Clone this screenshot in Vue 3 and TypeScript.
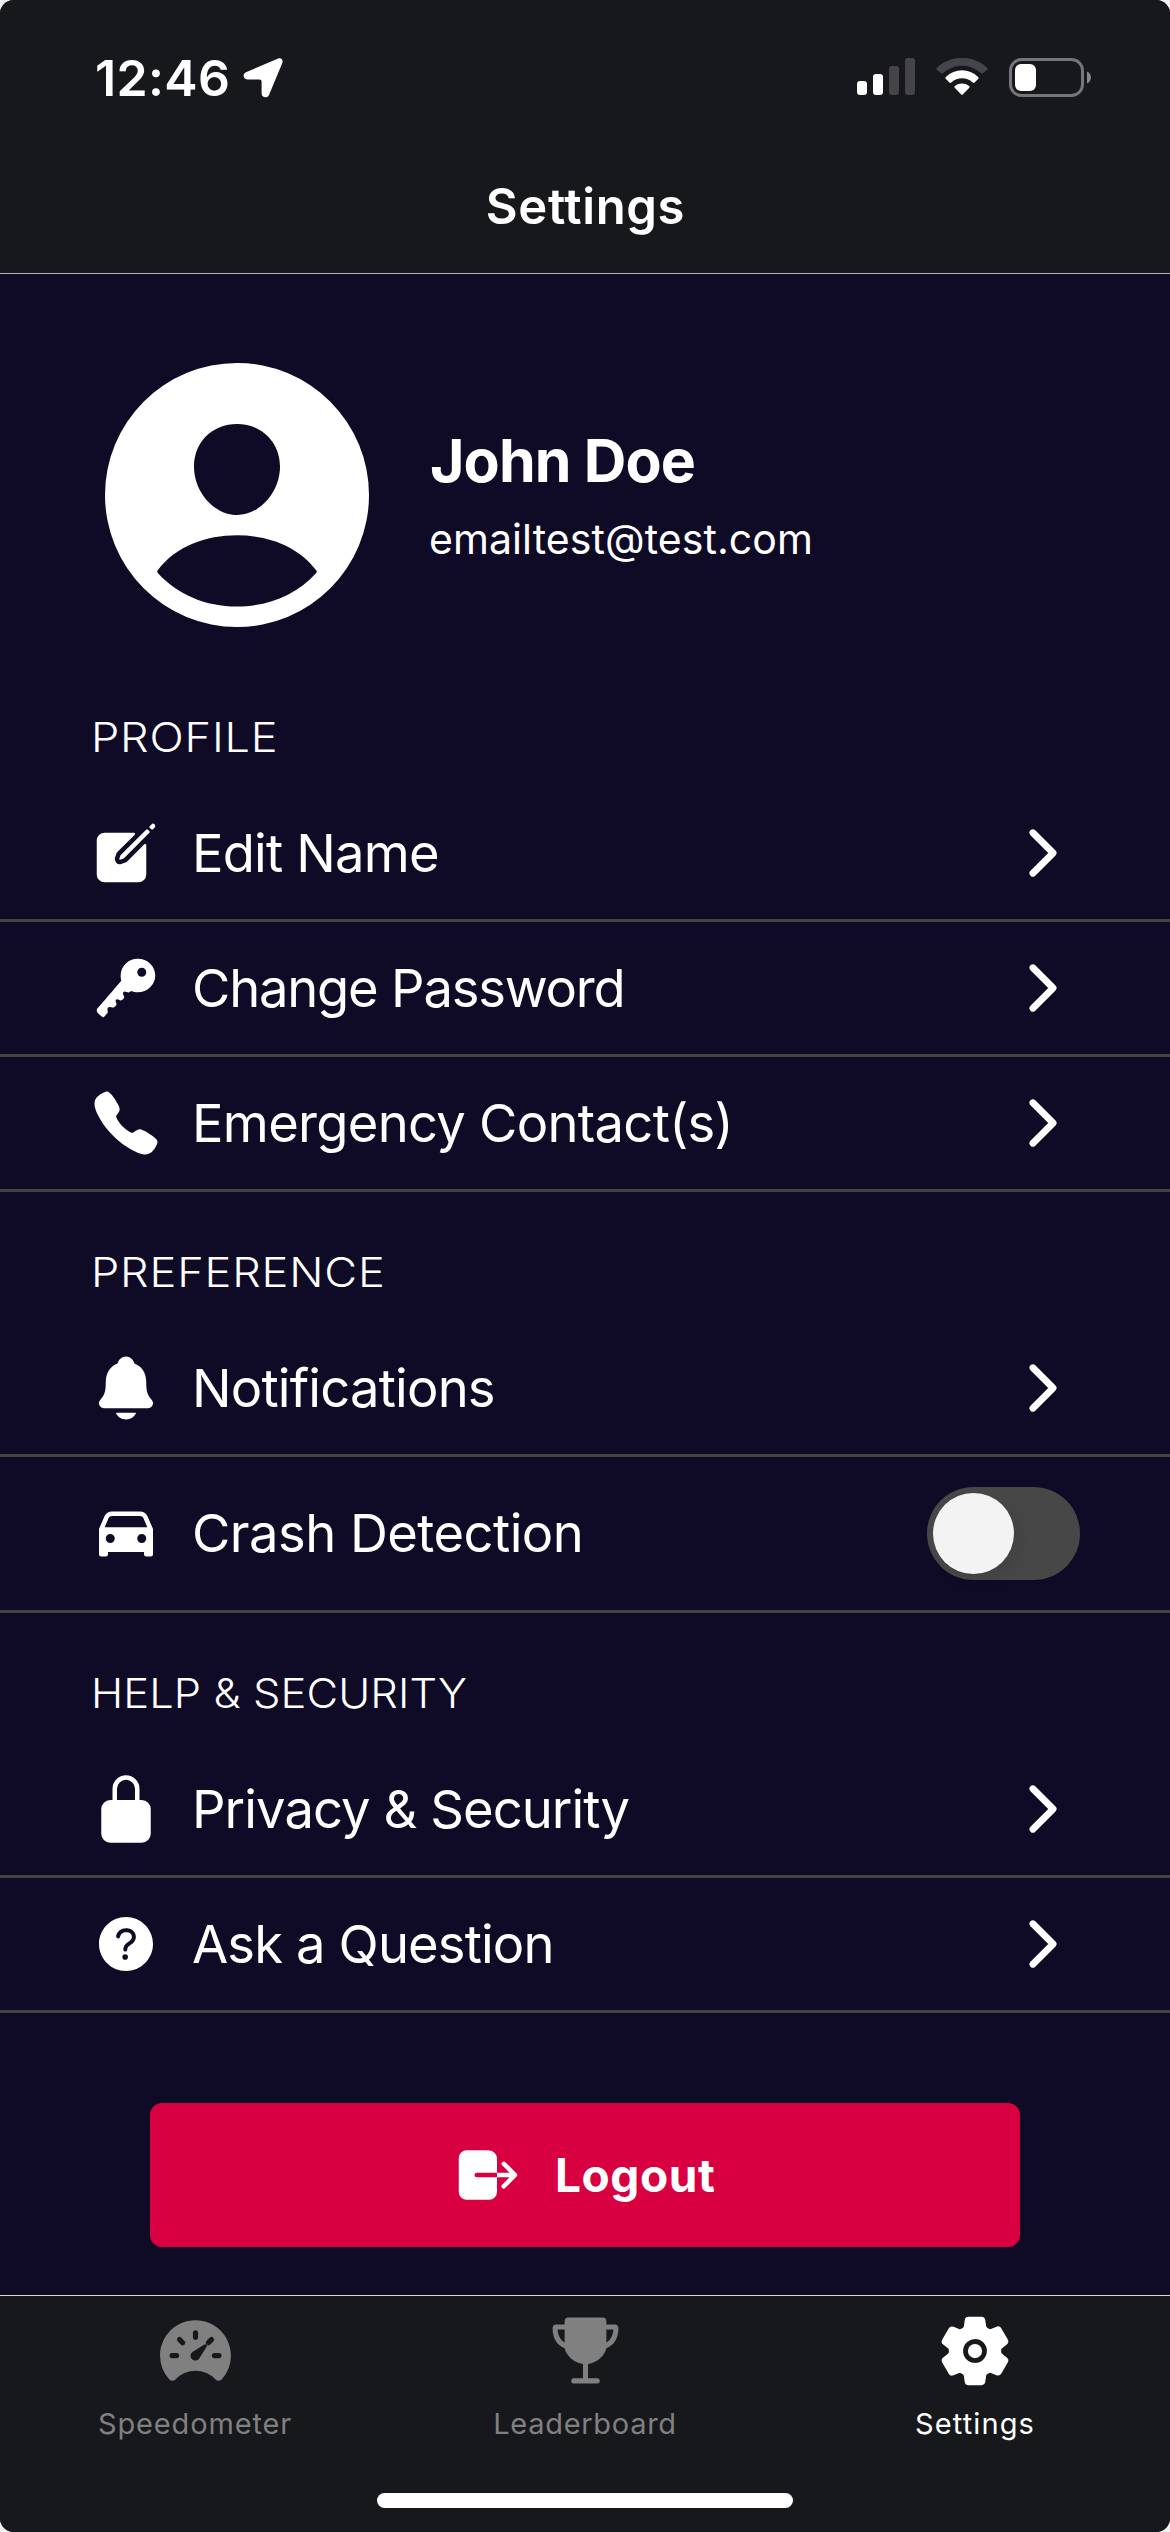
<script setup lang="ts">
interface Row {
  label: string
  icon: string
  toggle?: boolean
}

interface Section {
  title: string
  key: string
  rows: Row[]
}

const icons: Record<string, string> = {
  create:
    'M459.94 53.25a16.06 16.06 0 00-23.22-.56L424.35 65a8 8 0 000 11.31l11.34 11.32a8 8 0 0011.34 0l12.06-12c6.1-6.09 6.67-16.01.85-22.38zM399.34 90L218.82 270.2a9 9 0 00-2.31 3.93L208.16 299a3.91 3.91 0 004.86 4.86l24.85-8.35a9 9 0 003.93-2.31L422 112.66a9 9 0 000-12.66l-9.95-10a9 9 0 00-12.71 0zM386.34 193.66L264.45 315.79A41.08 41.08 0 01247.58 326l-25.9 8.67a35.92 35.92 0 01-44.33-44.33l8.67-25.9a41.08 41.08 0 0110.19-16.87l122.13-121.91A8 8 0 00312.69 112H104a56 56 0 00-56 56v240a56 56 0 0056 56h240a56 56 0 0056-56V199.31a8 8 0 00-13.66-5.65z',
  key: 'M218.1 167.17c0 13 0 25.6 4.1 37.4-43.1 50.6-156.9 184.3-167.5 194.5a20.17 20.17 0 00-6.7 15c0 8.5 5.2 16.7 9.6 21.3 6.6 6.9 34.8 33 40 28 15.4-15 18.5-19 24.8-25.2 9.5-9.3-1-28.3 2.3-36s6.8-9.2 12.5-10.4 15.8 2.9 23.7 3c8.3.1 12.8-3.4 19-9.2 5-4.6 8.6-8.9 8.7-15.6.2-9-12.8-20.9-3.1-30.4s23.7 6.2 34 5 22.8-15.5 24.1-21.6-11.7-21.8-9.7-30.7c.7-3 6.8-10 11.4-11s25 6.9 29.6 5.9c5.6-1.2 12.1-7.1 17.4-10.4 15.5 6.7 29.6 9.4 47.7 9.4 68.5 0 124-53.4 124-119.2S408.5 48 340 48s-121.9 53.37-121.9 119.17zM400 144a32 32 0 11-32-32 32 32 0 0132 32z',
  call: 'M391 480c-19.52 0-46.94-7.06-88-30-49.93-28-88.55-53.85-138.21-103.38C116.91 298.77 93.61 267.79 61 208.45c-36.84-67-30.56-102.12-23.54-117.13C45.82 73.38 58.16 62.65 74.11 52a176.3 176.3 0 0128.64-15.2c1-.43 1.93-.84 2.76-1.21 4.95-2.23 12.45-5.6 21.95-2 6.34 2.38 12 7.25 20.86 16 18.17 17.92 43 57.83 52.16 77.43 6.15 13.21 10.22 21.93 10.23 31.71 0 11.45-5.76 20.28-12.75 29.81-1.31 1.79-2.61 3.5-3.87 5.16-7.61 10-9.28 12.89-8.18 18.05 2.23 10.37 18.86 41.24 46.19 68.51s57.31 42.85 67.72 45.07c5.38 1.15 8.33-.59 18.65-8.47 1.48-1.13 3-2.3 4.59-3.47 10.66-7.93 19.08-13.54 30.26-13.54h.06c9.73 0 18.06 4.22 31.86 11.18 18 9.08 59.11 33.59 77.14 51.78 8.77 8.84 13.66 14.48 16.05 20.81 3.6 9.53.21 17-2 22-.37.83-.78 1.74-1.21 2.75a176.49 176.49 0 01-15.29 28.58c-10.63 15.9-21.4 28.21-39.38 36.58A67.42 67.42 0 01391 480z',
  bell: 'M440.08 341.31c-1.66-2-3.29-4-4.89-5.93-22-26.61-35.31-42.67-35.31-118 0-39-9.33-71-27.72-95-13.56-17.73-31.89-31.18-56.05-41.12a3 3 0 01-.82-.67C306.6 51.49 282.82 32 256 32s-50.59 19.49-59.28 48.56a3.13 3.13 0 01-.81.65c-56.38 23.21-83.78 67.74-83.78 136.14 0 75.36-13.29 91.42-35.31 118-1.6 1.93-3.23 3.89-4.89 5.93a35.16 35.16 0 00-4.65 37.62c6.17 13 19.32 21.07 34.33 21.07H410.5c14.94 0 28-8.06 34.19-21a35.17 35.17 0 00-4.61-37.66zM256 480a80.06 80.06 0 0070.44-42.13 4 4 0 00-3.54-5.87H189.12a4 4 0 00-3.55 5.87A80.06 80.06 0 00256 480z',
  car: 'M447.68 220.78a16 16 0 00-1-3.08l-37.78-88.16C400.19 109.17 379 96 354.89 96H157.11c-24.09 0-45.3 13.17-54 33.54L65.29 217.7A15.72 15.72 0 0064 224v176a16 16 0 0016 16h32a16 16 0 0016-16v-16h256v16a16 16 0 0016 16h32a16 16 0 0016-16V224a16.15 16.15 0 00-.32-3.22zM144 320a32 32 0 1132-32 32 32 0 01-32 32zm224 0a32 32 0 1132-32 32 32 0 01-32 32zM104.26 208l28.23-65.85C136.11 133.69 146 128 157.11 128h197.78c11.1 0 21 5.69 24.62 14.15L407.74 208z',
  lock: 'M368 192h-16v-80a96 96 0 10-192 0v80h-16a64.07 64.07 0 00-64 64v176a64.07 64.07 0 0064 64h224a64.07 64.07 0 0064-64V256a64.07 64.07 0 00-64-64zm-48 0H192v-80a64 64 0 11128 0z',
  help: 'M256 64C150 64 64 150 64 256s86 192 192 192 192-86 192-192S362 64 256 64zm-6 304a20 20 0 1120-20 20 20 0 01-20 20zm33.44-102C267.23 276.88 265 286.85 265 296a14 14 0 01-28 0c0-21.91 10.08-39.33 30.82-53.26C287.1 229.8 298 221.6 298 203.57c0-12.26-7-21.57-21.49-28.46-3.41-1.62-11-3.2-20.34-3.09-11.72.15-20.82 2.95-27.83 8.59C215.12 191.25 214 202.83 214 203a14 14 0 11-28-1.35c.11-2.43 1.8-24.32 24.77-42.8 11.91-9.58 27.06-14.56 45-14.78 12.7-.15 24.63 2 32.72 5.82C312.7 161.34 326 180.43 326 203.57c0 33.83-22.61 49.02-42.56 62.43z',
}

const sections: Section[] = [
  {
    title: 'PROFILE',
    key: 'profile',
    rows: [
      { label: 'Edit Name', icon: 'create' },
      { label: 'Change Password', icon: 'key' },
      { label: 'Emergency Contact(s)', icon: 'call' },
    ],
  },
  {
    title: 'PREFERENCE',
    key: 'preference',
    rows: [
      { label: 'Notifications', icon: 'bell' },
      { label: 'Crash Detection', icon: 'car', toggle: true },
    ],
  },
  {
    title: 'HELP & SECURITY',
    key: 'support',
    rows: [
      { label: 'Privacy & Security', icon: 'lock' },
      { label: 'Ask a Question', icon: 'help' },
    ],
  },
]
</script>

<template>
  <div class="screen">
    <header class="top">
      <div class="status">
        <div class="clock">
          <span class="time">12:46</span>
          <svg class="location" width="40" height="40" viewBox="0 0 40 40">
            <path d="M34.6 .8C38 -.6 40.6 1.6 39.2 5.2L26 37C24.6 40.6 18.6 40 18.6 35.6V23.6Q18.6 21.4 16.4 21.4H4.4C0 21.4 -.8 15.8 3 14.2Z" fill="#fff" />
          </svg>
        </div>
        <div class="indicators">
          <svg width="58" height="38" viewBox="0 0 58 38">
            <rect x="0" y="23" width="10" height="14" rx="3" fill="#fff" />
            <rect x="16" y="16" width="10" height="21" rx="3" fill="#fff" />
            <rect x="32" y="8" width="10" height="29" rx="3" fill="#454549" />
            <rect x="48" y="0" width="10" height="37" rx="3" fill="#454549" />
          </svg>
          <svg width="52" height="38" viewBox="0 0 52 38">
            <path d="M.8 11.8Q-.2 10.8 .8 9.8C14.6 -3.4 37.4 -3.4 51.2 9.8Q52.2 10.8 51.2 11.8L47 15.3Q46 16.1 45 15.2C34 5.2 18 5.2 7 15.2Q6 16.1 5 15.3Z" fill="#454549" />
            <path d="M9.7 20.8Q8.8 19.8 9.8 18.9C19 10.1 33 10.1 42.2 18.9Q43.2 19.8 42.3 20.8L38.6 24.5Q37.7 25.3 36.7 24.5C30.5 18.9 21.5 18.9 15.3 24.5Q14.3 25.3 13.4 24.5Z" fill="#fff" />
            <path d="M18.7 29.7Q17.9 28.8 18.9 28C23 24.7 29 24.7 33.1 28Q34.1 28.8 33.3 29.7L27 36.2Q26 37.2 25 36.2Z" fill="#fff" />
          </svg>
          <svg width="82" height="40" viewBox="0 0 82 40">
            <rect x="1.5" y="1.5" width="72" height="36" rx="11" fill="none" stroke="#76767a" stroke-width="3" />
            <rect x="6" y="6" width="21" height="27" rx="6" fill="#fff" />
            <path d="M78 13.5C83.3 15.5 83.3 23.5 78 25.5Z" fill="#88888b" />
          </svg>
        </div>
      </div>
      <h1 class="title"><span>Settings</span></h1>
    </header>

    <main class="content">
      <section class="user">
        <svg class="avatar" width="264" height="264" viewBox="0 0 264 264">
          <path
            fill="#fff"
            fill-rule="evenodd"
            d="M132 0A132 132 0 10132 264A132 132 0 10132 0ZM132 61C107.5 61 89 79 89 103.5C89 129 109 152 132 152S175 129 175 103.5C175 79 156.5 61 132 61ZM52.6 207.5Q51.8 208.7 52.8 210C72 231.5 101 243.6 132 243.6S192 231.5 211.2 210Q212.2 208.7 211.4 207.5C193 183 163 172.3 132 172.3S71 183 52.6 207.5Z"
          />
        </svg>
        <div class="identity">
          <div class="name"><span>John Doe</span></div>
          <div class="email"><span>emailtest@test.com</span></div>
        </div>
      </section>

      <section v-for="section in sections" :key="section.key" :class="['group', section.key]">
        <h2 class="heading"><span class="heading-text">{{ section.title }}</span></h2>
        <div v-for="row in section.rows" :key="row.label" :class="['row', row.icon, { tall: row.toggle }]">
          <svg class="icon" viewBox="0 0 512 512"><path :d="icons[row.icon]" fill="#fff" fill-rule="evenodd" /></svg>
          <span class="label">{{ row.label }}</span>
          <span v-if="row.toggle" class="toggle"><span class="knob" /></span>
          <svg v-else class="chevron" viewBox="0 0 512 512">
            <path d="M184 112l144 144-144 144" fill="none" stroke="#fff" stroke-width="48" stroke-linecap="round" stroke-linejoin="round" />
          </svg>
        </div>
      </section>

      <button class="logout" type="button">
        <svg class="exit" viewBox="0 0 512 512">
          <path
            fill="#fff"
            d="M160 256a16 16 0 0116-16h144V136c0-32-33.79-56-64-56H104a56.06 56.06 0 00-56 56v240a56.06 56.06 0 0056 56h160a56.06 56.06 0 0056-56V272H176a16 16 0 01-16-16zM459.31 244.69l-80-80a16 16 0 00-22.62 22.62L409.37 240H320v32h89.37l-52.68 52.69a16 16 0 1022.62 22.62l80-80a16 16 0 000-22.62z"
          />
        </svg>
        <span class="logout-label">Logout</span>
      </button>
    </main>

    <nav class="tabs">
      <div class="tab speed">
        <div class="tab-icon">
          <svg width="81" height="81" viewBox="0 0 512 512">
            <path
              fill="#808080"
              d="M256 64C132.3 64 32 164.2 32 287.9a223.18 223.18 0 0056.3 148.5c1.1 1.2 2.1 2.4 3.2 3.5a25.19 25.19 0 0037.1-.1 173.13 173.13 0 01254.8 0 25.19 25.19 0 0037.1.1l3.2-3.5A223.18 223.18 0 00480 287.9C480 164.2 379.7 64 256 64z"
            />
            <path d="M256 144v28M108 288h28M376 288h28M155 187l20 20M357 187l-20 20" stroke="#17181c" stroke-width="33" stroke-linecap="round" />
            <path fill="#17181c" d="M326.1 231.9l-47.5 75.5a31 31 0 01-7 7 30.11 30.11 0 01-35-49l75.5-47.5a10.23 10.23 0 0111.7 0 10.06 10.06 0 012.3 14z" />
          </svg>
        </div>
        <span class="tab-label">Speedometer</span>
      </div>
      <div class="tab board">
        <div class="tab-icon">
          <svg width="81" height="81" viewBox="0 0 512 512">
            <path
              fill="#808080"
              fill-rule="evenodd"
              d="M148 48H364a24 24 0 0124 24V92H440a24 24 0 0124 24C464 182 434 224 388 242C376 292 330 332 272 342V432H330a16 16 0 010 32H182a16 16 0 010-32H240V342C182 332 136 292 124 242C78 224 48 182 48 116a24 24 0 0124-24H124V72a24 24 0 0124-24ZM124 124H80C82 163 97 189 124 206ZM388 124H432C430 163 415 189 388 206Z"
            />
          </svg>
        </div>
        <span class="tab-label">Leaderboard</span>
      </div>
      <div class="tab active">
        <div class="tab-icon">
          <svg width="76" height="76" viewBox="0 0 512 512">
            <circle cx="256" cy="256" r="48" fill="#fff" />
            <path
              fill="#fff"
              d="M470.39 300l-.47-.38-31.56-24.75a16.11 16.11 0 01-6.1-13.33v-11.56a16 16 0 016.11-13.22L469.92 212l.47-.38a26.68 26.68 0 005.9-34.06l-42.71-73.9a1.59 1.59 0 01-.13-.22A26.86 26.86 0 00401 92.14l-.35.13-37.1 14.93a15.94 15.94 0 01-14.47-1.29q-4.92-3.1-10-5.86a15.94 15.94 0 01-8.19-11.82l-5.59-39.59-.12-.72A27.22 27.22 0 00298.76 26h-85.52a26.92 26.92 0 00-26.45 22.39l-.09.56-5.57 39.67a16 16 0 01-8.13 11.82 175.21 175.21 0 00-10 5.82 15.92 15.92 0 01-14.43 1.27l-37.13-15-.35-.14a26.87 26.87 0 00-32.48 11.34l-.13.22-42.77 73.95a26.71 26.71 0 005.9 34.1l.47.38 31.56 24.75a16.11 16.11 0 016.1 13.33v11.56a16 16 0 01-6.11 13.22L42.08 300l-.47.38a26.68 26.68 0 00-5.9 34.06l42.71 73.9a1.59 1.59 0 01.13.22 26.86 26.86 0 0032.45 11.3l.35-.13 37.07-14.93a15.94 15.94 0 0114.47 1.29q4.92 3.11 10 5.86a15.94 15.94 0 018.19 11.82l5.56 39.59.12.72A27.22 27.22 0 00213.24 486h85.52a26.92 26.92 0 0026.45-22.39l.09-.56 5.57-39.67a16 16 0 018.18-11.82c3.42-1.84 6.76-3.79 10-5.82a15.92 15.92 0 0114.43-1.27l37.13 14.95.35.14a26.85 26.85 0 0032.48-11.34 2.53 2.53 0 01.13-.22l42.71-73.89a26.7 26.7 0 00-5.89-34.11zm-134.48-40.24a80 80 0 11-83.66-83.67 80.21 80.21 0 0183.66 83.67z"
            />
          </svg>
        </div>
        <span class="tab-label">Settings</span>
      </div>
      <div class="home-bar" />
    </nav>
  </div>
</template>

<style>
html,
body {
  background: #f1f1f1;
}
</style>

<style scoped>
.screen {
  display: flex;
  flex-direction: column;
  width: 1170px;
  height: 2532px;
  overflow: hidden;
  border-radius: 14px;
  background: #0f0b26;
  color: #fff;
  font-family: Inter, 'Liberation Sans', sans-serif;
}
.screen *,
.screen {
  box-sizing: border-box;
}
svg {
  display: block;
  flex: none;
}
span {
  white-space: nowrap;
}
.top {
  flex: none;
  height: 274px;
  background: #17181c;
  border-bottom: 1px solid #b3b2ba;
}
.status {
  display: flex;
  justify-content: space-between;
  height: 141px;
  padding: 58px 79px 0 95px;
}
.clock,
.indicators {
  display: flex;
  align-items: flex-start;
}
.clock {
  gap: 13px;
}
.time {
  width: 135px;
  font-size: 50px;
  line-height: 40px;
  font-weight: 600;
  letter-spacing: 0.37px;
}
.indicators {
  gap: 21px;
}
.title {
  display: flex;
  justify-content: center;
  margin: 0;
  padding-left: 1px;
  font-size: 49px;
  line-height: 132px;
  font-weight: 600;
  letter-spacing: 0.63px;
}
.content {
  flex: 1;
  display: flex;
  flex-direction: column;
}
.user {
  display: flex;
  height: 383px;
  padding: 89px 0 0 105px;
}
.identity {
  margin-left: 60px;
  padding-top: 58px;
}
.name {
  padding-left: 1px;
  font-size: 59px;
  line-height: 80px;
  font-weight: 700;
  letter-spacing: -0.88px;
}
.email {
  font-size: 41px;
  line-height: 76px;
  letter-spacing: 0.08px;
}
.heading {
  display: flex;
  align-items: center;
  height: 130px;
  margin: 0;
  padding: 29px 0 0 91px;
  font-size: 41px;
  font-weight: 300;
}
/* widened letterforms for the section captions */
.heading-text {
  letter-spacing: 0.73px;
  transform: scaleX(1.1);
  transform-origin: left center;
}
.support .heading-text {
  letter-spacing: 0.08px;
  transform: scaleX(1.06);
}
.row {
  display: flex;
  align-items: center;
  height: 135px;
  padding: 0 91px 0 90px;
  border-bottom: 3px solid #424242;
}
.row.tall {
  height: 156px;
  padding-right: 90px;
}
.icon,
.chevron,
.exit {
  width: 72px;
  height: 72px;
}
.label {
  flex: 1;
  margin-left: 30px;
  font-size: 52.5px;
  line-height: 72px;
  letter-spacing: -0.8px;
}
.key .label {
  letter-spacing: -1.2px;
}
.call .label {
  letter-spacing: -0.7px;
}
.car .label {
  margin-top: -1px;
  letter-spacing: -0.53px;
}
.lock .label {
  letter-spacing: -0.92px;
}
.help .label {
  letter-spacing: -0.86px;
}
.toggle {
  width: 153px;
  height: 93px;
  padding: 6px;
  border-radius: 47px;
  background: #474747;
}
.knob {
  display: block;
  width: 81px;
  height: 81px;
  border-radius: 50%;
  background: #f3f3f3;
  box-shadow: 6px 6px 14px rgba(0, 0, 0, 0.08);
}
.logout {
  display: flex;
  align-items: center;
  height: 144px;
  margin: 90px 150px 0;
  padding: 0 0 0 302px;
  border: 0;
  border-radius: 12px;
  background: #d80040;
  color: #fff;
  font: 700 46px Inter, 'Liberation Sans', sans-serif;
  letter-spacing: 0.57px;
}
.logout-label {
  margin-left: 31px;
}
.tabs {
  flex: none;
  display: grid;
  grid-template-columns: repeat(3, 390px);
  grid-template-rows: 197px 15px;
  height: 237px;
  background: #17181c;
  border-top: 1px solid #d9d9de;
}
.tab {
  display: flex;
  flex-direction: column;
  align-items: center;
  padding-top: 14px;
  color: #808080;
}
.tab.active {
  color: #fff;
}
.tab-icon {
  display: flex;
  align-items: center;
  height: 81px;
}
.tab-label {
  margin-top: 13px;
  font-size: 29px;
  line-height: 40px;
  letter-spacing: 0.85px;
}
.board .tab-label {
  letter-spacing: 0.7px;
}
.active .tab-label {
  letter-spacing: 1.13px;
}
.home-bar {
  grid-column: 1 / -1;
  justify-self: center;
  width: 416px;
  border-radius: 8px;
  background: #fff;
}
</style>
